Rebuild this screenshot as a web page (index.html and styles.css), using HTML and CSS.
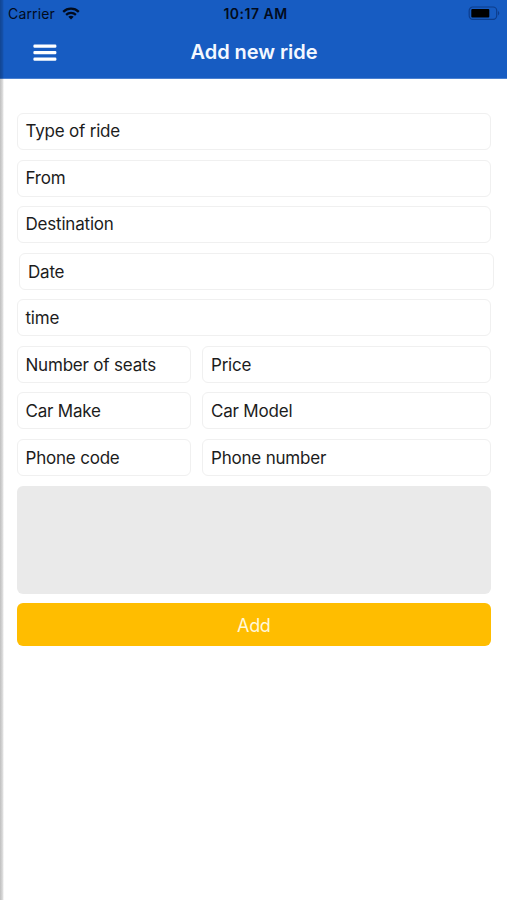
FILE: index.html
```html
<!DOCTYPE html>
<html lang="en">
<head>
<meta charset="utf-8">
<title>Add new ride</title>
<link rel="stylesheet" href="styles.css">
</head>
<body>
<div class="screen">
  <header class="header">
    <div class="status">
      <div class="carrier"><span class="carrier-name">Carrier</span>
        <svg class="wifi" width="18" height="13" viewBox="0 0 18 13" fill="none" stroke="#020b1c" stroke-width="2.3">
          <path d="M1.2 4.8C5.6.6 12.4.6 16.8 4.8"/>
          <path d="M4.1 7.9C6.9 5.3 11.1 5.3 13.9 7.9"/>
          <path d="M9 12.4 6.3 9.8Q9 7.6 11.7 9.8Z" fill="#020b1c" stroke="none"/>
        </svg>
      </div>
      <span class="clock">10:17 AM</span>
      <svg class="battery" width="33" height="15" viewBox="0 0 33 15">
        <rect x="1.2" y="1" width="27.5" height="12.4" rx="3.6" fill="none" stroke="#0d3d8c" stroke-width="1.2"/>
        <rect x="3.3" y="3" width="18" height="8.4" rx="1" fill="#000"/>
        <path d="M30 4.8Q32.6 7.2 30 9.6Z" fill="#0d3d8c"/>
      </svg>
    </div>
    <div class="navbar">
      <button class="menu" aria-label="Menu">
        <svg width="24" height="18" viewBox="0 0 24 18" fill="#fff">
          <rect x=".4" y=".6" width="23" height="3.2" rx="1.2"/>
          <rect x=".4" y="7.1" width="23" height="3.2" rx="1.2"/>
          <rect x=".4" y="13.6" width="23" height="3.2" rx="1.2"/>
        </svg>
      </button>
      <h1 class="title">Add new ride</h1>
      <span></span>
    </div>
  </header>
  <main class="form">
    <div class="field">Type of ride</div>
    <div class="field">From</div>
    <div class="field">Destination</div>
    <div class="field field-date">Date</div>
    <div class="field field-low">time</div>
    <div class="pair"><div class="field field-low">Number of seats</div><div class="field field-low">Price</div></div>
    <div class="pair"><div class="field field-low">Car Make</div><div class="field field-low">Car Model</div></div>
    <div class="pair"><div class="field field-low">Phone code</div><div class="field field-low">Phone number</div></div>
    <div class="notes"></div>
    <button class="add">Add</button>
  </main>
  <div class="edge"></div>
</div>
</body>
</html>
```

FILE: styles.css
```css
* { box-sizing: border-box; }
body { margin: 0; background: #fff; font-family: Inter, "Liberation Sans", sans-serif; }
.screen { position: relative; width: 507px; height: 900px; overflow: hidden; }
.header { height: 79px; background: #175cc2; border-bottom: 1px solid #4a80d0; }
.status { display: grid; grid-template-columns: 1fr auto 1fr; align-items: center; height: 27px; padding: 0 6px 0 8px; color: #020b1c; }
.carrier { display: flex; align-items: center; gap: 7px; }
.carrier-name { font-size: 14px; line-height: 27px; letter-spacing: .15px; }
.clock { padding-left: 2px; font-size: 14px; font-weight: 600; line-height: 27px; letter-spacing: .5px; }
.battery { justify-self: end; }
.navbar { display: grid; grid-template-columns: 1fr auto 1fr; align-items: center; height: 51px; }
.menu { display: flex; width: 24px; margin-left: 33px; padding: 0; border: 0; background: none; }
.title { margin: 0; padding-left: 1px; color: #f4f8ff; font-size: 20px; font-weight: 600; line-height: 51px; letter-spacing: -.05px; }
.form { display: flex; flex-direction: column; gap: 9.57px; padding: 34px 16px 0 16.5px; }
.field { height: 37px; padding: 0 8px; border: 1.4px solid #f0f0f0; border-radius: 6px; color: #1c1c1c; font-size: 17px; line-height: 35px; letter-spacing: -.2px; white-space: nowrap; }
.field-date { margin-right: -3px; margin-left: 2.5px; line-height: 37px; }
.field-low { line-height: 37px; }
.pair { display: grid; grid-template-columns: 174px 1fr; gap: 11.5px; }
.notes { height: 108px; border-radius: 6px; background: #eaeaea; }
.add { height: 43px; padding: 2px 0 0; border: 0; border-radius: 6px; background: #ffbd00; color: #fff8d8; font-family: inherit; font-size: 18px; line-height: 41px; letter-spacing: -.4px; }
.edge { position: absolute; top: 0; left: 0; width: 4px; height: 900px; background: linear-gradient(to right, rgba(0,0,0,.25), rgba(0,0,0,.15) 60%, rgba(0,0,0,0)); }
```
